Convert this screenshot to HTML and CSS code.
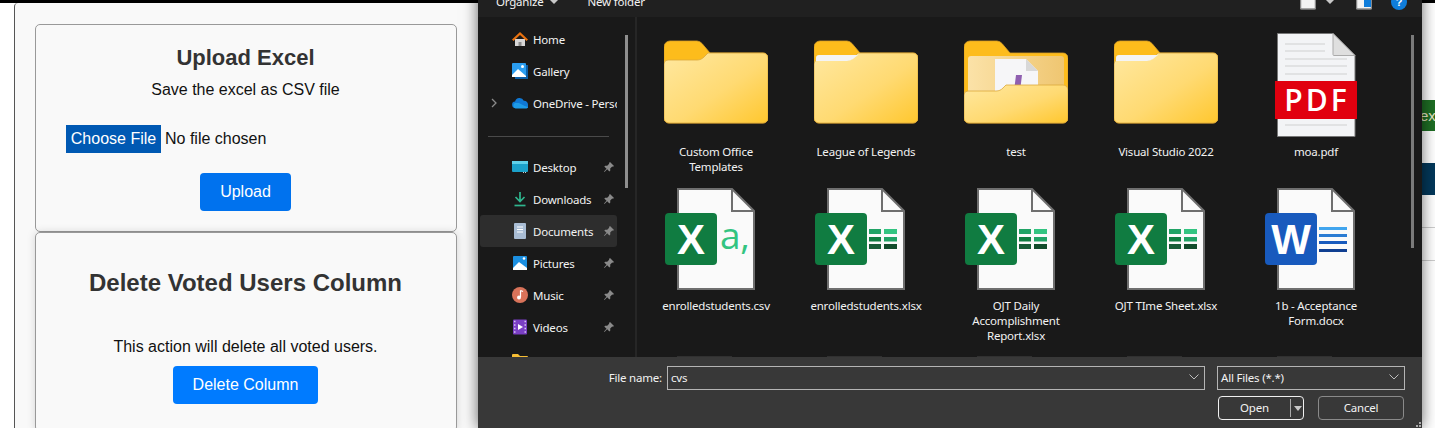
FILE: index.html
```html
<!DOCTYPE html>
<html lang="en">

<head>
    <meta charset="UTF-8">
    <title>Upload Excel</title>
    <link rel="stylesheet" href="styles.css">
</head>

<body>
    <svg class="defs" width="0" height="0" aria-hidden="true">
        <defs>
            <linearGradient id="folderFront" x1="0" y1="0" x2="1" y2="1">
                <stop offset="0" stop-color="#ffe8a0" />
                <stop offset="0.55" stop-color="#ffda72" />
                <stop offset="1" stop-color="#ffc72e" />
            </linearGradient>
            <linearGradient id="folderInner" x1="0" y1="0" x2="1" y2="0">
                <stop offset="0" stop-color="#fbe2a8" />
                <stop offset="1" stop-color="#efc671" />
            </linearGradient>
            <symbol id="folderBack" viewBox="0 0 104 104">
                <path d="M0 14a6 6 0 0 1 6-6h27a7 7 0 0 1 5 2.500l8 9.500h53a5 5 0 0 1 5 5v60a5 5 0 0 1-5 5H5a5 5 0 0 1-5-5z" fill="#fdbc1c" stroke="#d9a028" stroke-width="0.8" />
            </symbol>
            <symbol id="folder" viewBox="0 0 104 104">
                <use href="#folderBack" />
                <path d="M0 31a4 4 0 0 1 4-4h29c3 0 5-1 7-3l4-4h55a5 5 0 0 1 5 5v60a5 5 0 0 1-5 5H5a5 5 0 0 1-5-5z" fill="url(#folderFront)" stroke="#dca83a" stroke-width="0.8" />
            </symbol>
            <symbol id="folderPaper" viewBox="0 0 104 104">
                <use href="#folder" />
                <path d="M2 28v-3a3 3 0 0 1 3-3h39l-5 4c-2 1-4 2-6 2z" fill="#f4f4f4" />
            </symbol>
            <symbol id="folderDoc" viewBox="0 0 104 104">
                <use href="#folderBack" />
                <rect x="4" y="23" width="96" height="38" rx="3" fill="url(#folderInner)" />
                <path d="M31 26h31l12 12v20H31z" fill="#f6f6f8" />
                <path d="M62 26l12 12H62z" fill="#d8d8d8" />
                <path d="M52 42h6l-1.500 12h-6z" fill="#8f5fb0" />
                <path d="M0 62a4 4 0 0 1 4-4h28c3 0 5-1 7-3l3-3h57a5 5 0 0 1 5 5v28a5 5 0 0 1-5 5H5a5 5 0 0 1-5-5z" fill="url(#folderFront)" stroke="#dca83a" stroke-width="0.8" />
            </symbol>
            <symbol id="page" viewBox="0 0 104 104">
                <path d="M14 1h54l22 22v78H14z" fill="#fafafa" stroke="#6f6f6f" stroke-width="2" />
                <path d="M68 1v22h22" fill="none" stroke="#6f6f6f" stroke-width="2" />
            </symbol>
            <symbol id="excelBadge" viewBox="0 0 104 104">
                <use href="#page" />
                <rect x="1" y="25" width="52" height="52" rx="4" fill="#107c41" />
                <text x="27" y="66" class="badge-text">X</text>
            </symbol>
            <symbol id="xlsx" viewBox="0 0 104 104">
                <use href="#excelBadge" />
                <rect x="55" y="41" width="12" height="5" fill="#21a366" />
                <rect x="70" y="41" width="13" height="5" fill="#33c481" />
                <rect x="55" y="49" width="12" height="4.500" fill="#107c41" />
                <rect x="70" y="49" width="13" height="4.500" fill="#21a366" />
                <rect x="55" y="56" width="12" height="5" fill="#185c37" />
                <rect x="70" y="56" width="13" height="5" fill="#124c2c" />
            </symbol>
            <symbol id="docx" viewBox="0 0 104 104">
                <use href="#page" />
                <rect x="1" y="25" width="52" height="52" rx="4" fill="#185abd" />
                <text x="27" y="66" class="badge-text">W</text>
                <rect x="55" y="39" width="28" height="3" fill="#41a5ee" />
                <rect x="55" y="46" width="28" height="3" fill="#2b7cd3" />
                <rect x="55" y="53" width="28" height="3" fill="#185abd" />
                <rect x="55" y="61" width="28" height="3" fill="#103f91" />
            </symbol>
            <symbol id="pin" viewBox="0 0 12 12">
                <path d="M7 1l4 4-1 .8-.8-.2-2 2 .1 2-.9.900-2.200-2.200L1.500 11 1 10.500l2.500-2.700L1.300 5.600l.9-.9 2 .1 2-2L6 2z" fill="#8a8a8a" />
            </symbol>
        </defs>
    </svg>

    <div class="top-bar"></div>

    <div class="page">
        <main class="panel">
            <section class="card card-upload">
                <h2>Upload Excel</h2>
                <p class="hint">Save the excel as CSV file</p>
                <label class="file-pick"><span class="file-btn">Choose File</span><span>No file chosen</span></label>
                <button class="btn btn-upload">Upload</button>
            </section>
            <section class="card card-delete">
                <h2 class="title-large">Delete Voted Users Column</h2>
                <p class="hint">This action will delete all voted users.</p>
                <button class="btn btn-delete">Delete Column</button>
            </section>
        </main>
        <div class="page-gap"></div>
        <div class="page-edge">
            <div class="edge-green">ext</div>
            <div class="edge-blue"></div>
            <div class="edge-line"></div>
            <div class="edge-line"></div>
        </div>
    </div>

    <div class="dialog">
        <div class="toolbar">
            <span class="tool-text">Organize</span>
            <span class="tool-caret"></span>
            <span class="tool-text tool-new">New folder</span>
            <span class="tool-right">
                <svg class="tool-icon" viewBox="0 0 16 16"><rect x="0.500" y="0" width="15" height="15" rx="1" fill="#f4f4f4" stroke="#8a8a8a" stroke-width="1.500" /></svg>
                <span class="tool-caret caret-view"></span>
                <svg class="tool-icon icon-pane" viewBox="0 0 16 16"><rect x="0.500" y="0" width="15" height="15" rx="1" fill="#f4f4f4" stroke="#8a8a8a" stroke-width="1.500" /><rect x="8" y="1" width="7" height="12" fill="#0f7ddb" /></svg>
                <svg class="tool-icon icon-help" viewBox="0 0 16 16"><circle cx="8" cy="8" r="8" fill="#0f7ddb" /><text x="8" y="12" class="help-mark">?</text></svg>
            </span>
        </div>

        <div class="browser">
            <nav class="nav-pane">
                <div class="nav-list">
                    <div class="nav-row">
                        <svg class="nav-icon" viewBox="0 0 16 16"><path d="M3 8h10v7H3z" fill="#d8d8d8" /><path d="M6.500 11h3v4h-3z" fill="#8c8c8c" /><path d="M8 1L0 8.500 1.500 10 8 4l6.500 6L16 8.500z" fill="#e8710f" /></svg>
                        <span class="nav-name">Home</span>
                    </div>
                    <div class="nav-row">
                        <svg class="nav-icon" viewBox="0 0 16 16"><rect x="3" y="2" width="13" height="14" fill="#0b5ea8" /><rect x="0" y="0" width="14" height="14" rx="1" fill="#2a9df0" /><path d="M0 12l6-6 8 7v1H0z" fill="#fff" /><circle cx="10.500" cy="3.500" r="1.500" fill="#fff" /></svg>
                        <span class="nav-name">Gallery</span>
                    </div>
                    <div class="nav-row">
                        <svg class="nav-chevron" viewBox="0 0 6 10"><path d="M1 1l4 4-4 4" fill="none" stroke="#8a8a8a" stroke-width="1.300" /></svg>
                        <svg class="nav-icon" viewBox="0 0 16 16"><path d="M3.500 13a3.200 3.200 0 0 1-.4-6.400 4.600 4.600 0 0 1 8.700-.8 3.700 3.700 0 0 1 4.200 3.600V13z" fill="#0f78d4" /><path d="M3.500 13.500a3 3 0 0 1-.6-5.500h4l6 3 3 1c-.4 1-1.200 1.500-2 1.500z" fill="#1d9be8" /></svg>
                        <span class="nav-name">OneDrive - Personal</span>
                    </div>
                    <div class="nav-sep"></div>
                    <div class="nav-row">
                        <svg class="nav-icon" viewBox="0 0 16 16"><rect x="0" y="2" width="16" height="11" rx="1" fill="#1ba1c9" /><rect x="0" y="2" width="16" height="3" fill="#5fd0e8" /><path d="M11 13h1v1h-1zM13 13h1v1h-1z" fill="#d0d0d0" /></svg>
                        <span class="nav-name">Desktop</span>
                        <svg class="nav-pin"><use href="#pin" /></svg>
                    </div>
                    <div class="nav-row">
                        <svg class="nav-icon" viewBox="0 0 16 16"><path d="M8 1v9M3.500 6L8 10.500 12.500 6" fill="none" stroke="#2fb58e" stroke-width="1.700" /><path d="M2.500 14.500h11" stroke="#2fb58e" stroke-width="1.700" /></svg>
                        <span class="nav-name">Downloads</span>
                        <svg class="nav-pin"><use href="#pin" /></svg>
                    </div>
                    <div class="nav-row nav-active">
                        <svg class="nav-icon" viewBox="0 0 16 16"><rect x="2" y="0" width="12" height="16" rx="1" fill="#a9bdd4" /><path d="M5 4h6M5 6.500h6M5 9h6" stroke="#fff" stroke-width="1.200" /></svg>
                        <span class="nav-name">Documents</span>
                        <svg class="nav-pin"><use href="#pin" /></svg>
                    </div>
                    <div class="nav-row">
                        <svg class="nav-icon" viewBox="0 0 16 16"><rect x="1" y="1" width="14" height="14" rx="1" fill="#1b8fe0" /><path d="M1 13l6-6 8 6v2H1z" fill="#fff" /><circle cx="12" cy="3.500" r="1.300" fill="#fff" /></svg>
                        <span class="nav-name">Pictures</span>
                        <svg class="nav-pin"><use href="#pin" /></svg>
                    </div>
                    <div class="nav-row">
                        <svg class="nav-icon" viewBox="0 0 16 16"><circle cx="8" cy="8" r="8" fill="#d9735a" /><path d="M8.500 3.500v6.500" stroke="#fff" stroke-width="1.200" /><path d="M8.500 3.500l2.500 1" stroke="#fff" stroke-width="1.200" /><circle cx="7" cy="10.500" r="2" fill="#fff" /></svg>
                        <span class="nav-name">Music</span>
                        <svg class="nav-pin"><use href="#pin" /></svg>
                    </div>
                    <div class="nav-row">
                        <svg class="nav-icon" viewBox="0 0 16 16"><rect x="1" y="0.500" width="14" height="15" rx="1" fill="#7a3fc4" /><path d="M6 5l5 3-5 3z" fill="#fff" /><path d="M2 2.500h1.500M2 6h1.500M2 9.500h1.500M2 13h1.500M12.500 2.500H14M12.500 6H14M12.500 9.500H14M12.500 13H14" stroke="#d8c4f2" stroke-width="1.300" /></svg>
                        <span class="nav-name">Videos</span>
                        <svg class="nav-pin"><use href="#pin" /></svg>
                    </div>
                    <div class="nav-row">
                        <svg class="nav-icon" viewBox="0 0 16 16"><path d="M0 4a1 1 0 0 1 1-1h5l2 2h7a1 1 0 0 1 1 1v7H0z" fill="#f6bd34" /></svg>
                        <span class="nav-name">ccna</span>
                    </div>
                </div>
                <div class="nav-thumb"></div>
            </nav>
            <div class="splitter"></div>

            <div class="file-grid">
                <div class="file-item">
                    <svg class="file-icon"><use href="#folder" /></svg>
                    <span class="file-label">Custom Office<br>Templates</span>
                </div>
                <div class="file-item">
                    <svg class="file-icon"><use href="#folderPaper" /></svg>
                    <span class="file-label">League of Legends</span>
                </div>
                <div class="file-item">
                    <svg class="file-icon"><use href="#folderDoc" /></svg>
                    <span class="file-label">test</span>
                </div>
                <div class="file-item">
                    <svg class="file-icon"><use href="#folderPaper" /></svg>
                    <span class="file-label">Visual Studio 2022</span>
                </div>
                <div class="file-item">
                    <svg class="file-icon" viewBox="0 0 104 104">
                        <path d="M13.500 .5h55.500l22 22v81H13.500z" fill="#f3f4f6" stroke="#777" />
                        <path d="M69 .5v21a1 1 0 0 0 1 1h21z" fill="#dfdfdf" stroke="#aaa" />
                        <path d="M21 11h40M21 18h40M21 26h62M21 33h62M21 41h62M21 92h62" stroke="#cfcfcf" stroke-width="1.200" />
                        <rect x="11" y="48" width="82" height="38" fill="#e1000f" />
                        <text x="53" y="78" class="pdf-text">PDF</text>
                    </svg>
                    <span class="file-label">moa.pdf</span>
                </div>

                <div class="file-item row-two">
                    <svg class="file-icon" viewBox="0 0 104 104">
                        <use href="#excelBadge" />
                        <text x="56" y="61" class="csv-text">a,</text>
                    </svg>
                    <span class="file-label">enrolledstudents.csv</span>
                </div>
                <div class="file-item row-two">
                    <svg class="file-icon"><use href="#xlsx" /></svg>
                    <span class="file-label">enrolledstudents.xlsx</span>
                </div>
                <div class="file-item row-two">
                    <svg class="file-icon"><use href="#xlsx" /></svg>
                    <span class="file-label">OJT Daily<br>Accomplishment<br>Report.xlsx</span>
                </div>
                <div class="file-item row-two">
                    <svg class="file-icon"><use href="#xlsx" /></svg>
                    <span class="file-label">OJT TIme Sheet.xlsx</span>
                </div>
                <div class="file-item row-two">
                    <svg class="file-icon"><use href="#docx" /></svg>
                    <span class="file-label">1b - Acceptance<br>Form.docx</span>
                </div>

                <div class="file-peek"></div>
                <div class="file-peek"></div>
                <div class="file-peek"></div>
                <div class="file-peek"></div>
                <div class="file-peek"></div>
            </div>
            <div class="grid-thumb"></div>
        </div>

        <div class="open-bar">
            <div class="open-row">
                <span class="open-label">File name:</span>
                <div class="field field-name">
                    <span>cvs</span>
                    <svg class="field-chevron" viewBox="0 0 10 6"><path d="M.5 .5L5 5 9.500 .5" fill="none" stroke="#bdbdbd" /></svg>
                </div>
                <div class="field field-type">
                    <span>All Files (*.*)</span>
                    <svg class="field-chevron" viewBox="0 0 10 6"><path d="M.5 .5L5 5 9.500 .5" fill="none" stroke="#bdbdbd" /></svg>
                </div>
            </div>
            <div class="button-row">
                <div class="dlg-btn dlg-open">
                    <span class="dlg-open-text">Open</span>
                    <span class="dlg-split"></span>
                    <span class="tool-caret dlg-caret"></span>
                </div>
                <div class="dlg-btn dlg-cancel">Cancel</div>
            </div>
            <svg class="grip" viewBox="0 0 6 6"><path d="M4 0h2v2H4zM1 3h2v2H1zM4 3h2v2H4z" fill="#aaa" /></svg>
        </div>
    </div>
</body>

</html>
```

FILE: styles.css
```css
* {
    box-sizing: border-box;
}

body {
    margin: 0;
    height: 428px;
    overflow: hidden;
    position: relative;
    background-color: white;
    font-family: "Liberation Sans", Arial, sans-serif;
}

.defs {
    position: absolute;
}

.top-bar {
    height: 3px;
    background-color: black;
}

.page {
    display: flex;
    height: 425px;
    overflow: hidden;
}

/* left page under the dialog */
.panel {
    width: 464px;
    margin-left: 14px;
    padding: 21px 20px 0 20px;
    background-color: #f9f9f9;
    border-left: 1px solid #555;
    border-top-left-radius: 4px;
}

.card {
    width: 422px;
    display: flex;
    flex-direction: column;
    align-items: center;
    padding-right: 1px;
    background-color: #f9f9f9;
    border: 1px solid #999;
    border-radius: 5px;
}

.card-upload {
    height: 208px;
    padding-top: 20px;
}

.card-delete {
    height: 200px;
    padding-top: 36px;
    box-shadow: 0 0 8px rgba(0, 0, 0, 0.15);
}

h2 {
    margin: 0;
    font-size: 22px;
    line-height: 25px;
    color: #333;
}

.title-large {
    font-size: 24px;
    line-height: 28px;
}

.hint {
    margin: 11px 0 0 0;
    font-size: 16px;
    line-height: 18px;
    color: #111;
}

.card-delete .hint {
    margin-top: 41px;
}

.file-pick {
    align-self: flex-start;
    display: flex;
    align-items: center;
    gap: 4px;
    margin: 26px 0 0 30px;
    font-size: 16px;
    color: #111;
}

.file-btn {
    width: 95px;
    height: 28px;
    line-height: 28px;
    text-align: center;
    background-color: #0059b3;
    color: white;
}

.btn {
    height: 38px;
    border: none;
    border-radius: 4px;
    color: white;
    font-family: inherit;
    font-size: 16px;
    cursor: pointer;
}

.btn-upload {
    width: 91px;
    margin-top: 20px;
    background-color: #0072ee;
}

.btn-delete {
    width: 145px;
    margin-top: 10px;
    background-color: #007bff;
}

.page-gap {
    flex: 1;
}

.page-edge {
    width: 13px;
    padding-top: 97px;
    overflow: hidden;
}

.edge-green {
    height: 31px;
    line-height: 31px;
    font-size: 15px;
    text-indent: -2px;
    background-color: #1e6e24;
    color: #e6e6c8;
}

.edge-blue {
    height: 32px;
    margin-top: 32px;
    background-color: #03385a;
}

.edge-line {
    height: 33px;
    border-bottom: 1px solid #ccc;
}

/* file dialog, a window over the page */
.dialog {
    position: absolute;
    left: 478px;
    top: -15px;
    width: 944px;
    height: 443px;
    display: flex;
    flex-direction: column;
    background-color: #191919;
    box-shadow: 0 0 14px rgba(0, 0, 0, 0.6);
    font-family: "Noto Sans", "Open Sans", sans-serif;
    font-size: 11.5px;
    letter-spacing: -0.2px;
    color: #f2f2f2;
}

.toolbar {
    height: 32px;
    flex-shrink: 0;
    display: flex;
    align-items: center;
    padding-left: 18px;
    background-color: #202020;
}

.tool-caret {
    width: 0;
    height: 0;
    margin-left: 5px;
    border-left: 5px solid transparent;
    border-right: 5px solid transparent;
    border-top: 5px solid #c8c8c8;
}

.tool-new {
    margin-left: 29px;
}

.tool-right {
    display: flex;
    align-items: center;
    margin-left: auto;
    padding-right: 15px;
}

.tool-icon {
    width: 16px;
    height: 16px;
    margin-top: 2px;
}

.caret-view {
    margin: 0 0 0 9px;
}

.icon-pane {
    margin-left: 21px;
}

.icon-help {
    margin-left: 19px;
}

.help-mark {
    font-family: "Liberation Sans", sans-serif;
    font-size: 11px;
    font-weight: bold;
    fill: white;
    text-anchor: middle;
}

.browser {
    height: 340px;
    flex-shrink: 0;
    display: flex;
    overflow: hidden;
}

.nav-pane {
    width: 157px;
    flex-shrink: 0;
    display: flex;
    padding-left: 2px;
}

.nav-list {
    width: 137px;
    flex-shrink: 0;
    padding-top: 6px;
    overflow: hidden;
}

.nav-row {
    height: 32px;
    display: flex;
    align-items: center;
    padding-left: 32px;
    border-radius: 3px;
}

.nav-active {
    background-color: #2d2d2d;
}

.nav-icon {
    width: 16px;
    height: 16px;
    flex-shrink: 0;
}

.nav-chevron {
    width: 6px;
    height: 10px;
    flex-shrink: 0;
    margin: 0 15px 0 -21px;
}

.nav-name {
    flex: 1;
    min-width: 0;
    padding-left: 5px;
    white-space: nowrap;
    overflow: hidden;
}

.nav-pin {
    width: 12px;
    height: 12px;
    flex-shrink: 0;
    margin-right: 2px;
}

.nav-sep {
    height: 32px;
    margin: 0 8px 0 8px;
    padding-top: 2px;
    display: flex;
    align-items: center;
}

.nav-sep::after {
    content: "";
    flex: 1;
    height: 1px;
    background-color: #4a4a4a;
}

.nav-thumb {
    width: 3px;
    height: 153px;
    margin: 18px 0 0 8px;
    background-color: #8f8f8f;
}

.splitter {
    width: 2px;
    flex-shrink: 0;
    background-color: #262626;
}

.file-grid {
    width: 750px;
    flex-shrink: 0;
    margin-left: 4px;
    padding-top: 16px;
    display: grid;
    grid-template-columns: repeat(5, 150px);
    grid-template-rows: 155px 168px 10px;
}

.file-item {
    display: flex;
    flex-direction: column;
    align-items: center;
}

.file-icon {
    width: 104px;
    height: 104px;
    flex-shrink: 0;
}

.file-label {
    margin-top: 7px;
    line-height: 15px;
    text-align: center;
    white-space: nowrap;
}

.row-two .file-label {
    margin-top: 6px;
}

.file-peek {
    width: 55px;
    height: 1px;
    margin-left: 36px;
    background-color: #303030;
}

.badge-text {
    font-family: "Liberation Sans", sans-serif;
    font-size: 42px;
    font-weight: bold;
    fill: white;
    text-anchor: middle;
}

.pdf-text {
    font-family: "Open Sans", sans-serif;
    font-size: 30px;
    font-weight: 600;
    letter-spacing: 3px;
    fill: white;
    text-anchor: middle;
}

.csv-text {
    font-family: "Open Sans", sans-serif;
    font-size: 37px;
    fill: #33c481;
}

.grid-thumb {
    width: 3px;
    height: 213px;
    margin: 18px 0 0 20px;
    background-color: #7a7a7a;
}

.open-bar {
    flex: 1;
    position: relative;
    padding-top: 9px;
    background-color: #383838;
}

.open-row {
    display: flex;
    align-items: center;
}

.open-label {
    width: 184px;
    padding-bottom: 2px;
    text-align: right;
}

.field {
    height: 24px;
    display: flex;
    align-items: center;
    justify-content: space-between;
    padding: 0 5px 2px 3px;
    border: 1px solid #b4b4b4;
}

.field-name {
    width: 538px;
    margin-left: 5px;
}

.field-type {
    width: 188px;
    margin-left: 12px;
}

.field-chevron {
    width: 10px;
    height: 6px;
}

.button-row {
    display: flex;
    gap: 14px;
    margin: 6px 0 0 740px;
}

.dlg-btn {
    width: 86px;
    height: 24px;
    display: flex;
    align-items: center;
    justify-content: center;
    padding-bottom: 2px;
    border-radius: 4px;
}

.dlg-open {
    justify-content: flex-start;
    padding-bottom: 0;
    border: 1px solid #f0f0f0;
}

.dlg-open-text {
    width: 71px;
    padding-bottom: 2px;
    text-align: center;
}

.dlg-split {
    width: 1px;
    height: 18px;
    background-color: #aaa;
}

.dlg-caret {
    margin-left: 3px;
    border-left-width: 4px;
    border-right-width: 4px;
}

.dlg-cancel {
    border: 1px solid #8a8a8a;
}

.grip {
    position: absolute;
    right: 1px;
    bottom: 0;
    width: 6px;
    height: 6px;
}
```
